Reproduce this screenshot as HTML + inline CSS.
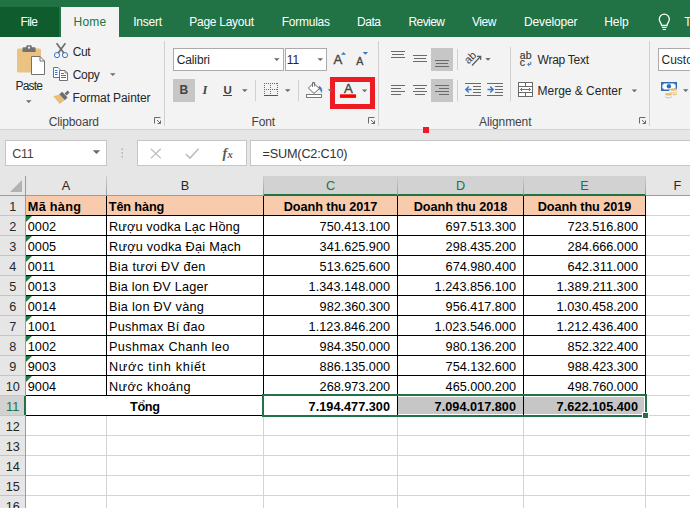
<!DOCTYPE html>
<html lang="vi"><head><meta charset="utf-8"><title>Excel</title>
<style>
html,body{margin:0;padding:0;}
body{width:690px;height:508px;overflow:hidden;background:#fff;font-family:"Liberation Sans",sans-serif;}
#app{position:relative;width:690px;height:508px;overflow:hidden;background:#fff;}
.t{position:absolute;white-space:pre;line-height:16px;font-family:"Liberation Sans",sans-serif;}
.b{position:absolute;}
svg{position:absolute;overflow:visible;}

</style></head>
<body>
<div id="app">
<div class="b" style="left:0px;top:0px;width:690px;height:37px;background:#217346;"></div>
<div class="b" style="left:0px;top:7px;width:59px;height:30px;background:#0f5c2e;"></div>
<div class="b" style="left:61px;top:7px;width:58px;height:30px;background:#f3f3f3;"></div>
<div class="b" style="left:0px;top:37px;width:690px;height:92px;background:#f3f3f3;"></div>
<div class="b" style="left:0px;top:129px;width:690px;height:1px;background:#d4d4d4;"></div>
<div class="b" style="left:0px;top:130px;width:690px;height:46px;background:#e6e6e6;"></div>
<div class="b" style="left:164px;top:41px;width:1px;height:85px;background:#d0d0d0;"></div>
<div class="b" style="left:378px;top:41px;width:1px;height:85px;background:#d0d0d0;"></div>
<div class="b" style="left:649px;top:41px;width:1px;height:85px;background:#d0d0d0;"></div>
<div class="b" style="left:173px;top:48px;width:111px;height:23px;background:#fff;box-sizing:border-box;border:1px solid #ababab;"></div>
<div class="b" style="left:285px;top:48px;width:42px;height:23px;background:#fff;box-sizing:border-box;border:1px solid #ababab;"></div>
<div class="b" style="left:658px;top:48px;width:40px;height:23px;background:#fff;box-sizing:border-box;border:1px solid #ababab;"></div>
<div class="b" style="left:173px;top:79px;width:22px;height:23px;background:#c6c6c6;"></div>
<div class="b" style="left:431px;top:48px;width:22px;height:23px;background:#c6c6c6;"></div>
<div class="b" style="left:431px;top:79px;width:22px;height:23px;background:#c6c6c6;"></div>
<div class="b" style="left:330px;top:77px;width:45px;height:32px;background:transparent;box-sizing:border-box;border:5px solid #ed1c24;"></div>
<div class="b" style="left:423px;top:127px;width:6px;height:6px;background:#ed1c24;"></div>
<div class="b" style="left:5px;top:140px;width:102px;height:26px;background:#fff;box-sizing:border-box;border:1px solid #c6c6c6;"></div>
<div class="b" style="left:137px;top:140px;width:110px;height:26px;background:#fff;box-sizing:border-box;border:1px solid #c6c6c6;"></div>
<div class="b" style="left:250px;top:140px;width:445px;height:26px;background:#fff;box-sizing:border-box;border:1px solid #c6c6c6;"></div>
<div class="b" style="left:0px;top:176px;width:690px;height:20px;background:#e6e6e6;"></div>
<div class="b" style="left:264px;top:176px;width:381px;height:19px;background:#d2d2d2;"></div>
<div class="b" style="left:264px;top:194px;width:382px;height:2px;background:#217346;"></div>
<div class="b" style="left:0px;top:396px;width:25px;height:19px;background:#d2d2d2;"></div>
<div class="b" style="left:0px;top:196px;width:25px;height:312px;background:#e6e6e6;"></div>
<div class="b" style="left:0px;top:396px;width:24px;height:19px;background:#d2d2d2;"></div>
<div class="b" style="left:26px;top:215px;width:664px;height:1px;background:#d4d4d4;"></div>
<div class="b" style="left:26px;top:235px;width:664px;height:1px;background:#d4d4d4;"></div>
<div class="b" style="left:26px;top:255px;width:664px;height:1px;background:#d4d4d4;"></div>
<div class="b" style="left:26px;top:275px;width:664px;height:1px;background:#d4d4d4;"></div>
<div class="b" style="left:26px;top:295px;width:664px;height:1px;background:#d4d4d4;"></div>
<div class="b" style="left:26px;top:315px;width:664px;height:1px;background:#d4d4d4;"></div>
<div class="b" style="left:26px;top:335px;width:664px;height:1px;background:#d4d4d4;"></div>
<div class="b" style="left:26px;top:355px;width:664px;height:1px;background:#d4d4d4;"></div>
<div class="b" style="left:26px;top:375px;width:664px;height:1px;background:#d4d4d4;"></div>
<div class="b" style="left:26px;top:395px;width:664px;height:1px;background:#d4d4d4;"></div>
<div class="b" style="left:26px;top:415px;width:664px;height:1px;background:#d4d4d4;"></div>
<div class="b" style="left:26px;top:435px;width:664px;height:1px;background:#d4d4d4;"></div>
<div class="b" style="left:26px;top:455px;width:664px;height:1px;background:#d4d4d4;"></div>
<div class="b" style="left:26px;top:475px;width:664px;height:1px;background:#d4d4d4;"></div>
<div class="b" style="left:26px;top:495px;width:664px;height:1px;background:#d4d4d4;"></div>
<div class="b" style="left:26px;top:515px;width:664px;height:1px;background:#d4d4d4;"></div>
<div class="b" style="left:106px;top:196px;width:1px;height:312px;background:#d4d4d4;"></div>
<div class="b" style="left:263px;top:196px;width:1px;height:312px;background:#d4d4d4;"></div>
<div class="b" style="left:397px;top:196px;width:1px;height:312px;background:#d4d4d4;"></div>
<div class="b" style="left:523px;top:196px;width:1px;height:312px;background:#d4d4d4;"></div>
<div class="b" style="left:645px;top:196px;width:1px;height:312px;background:#d4d4d4;"></div>
<div class="b" style="left:709px;top:196px;width:1px;height:312px;background:#d4d4d4;"></div>
<div class="b" style="left:0px;top:195px;width:25px;height:1px;background:#c4c4c4;"></div>
<div class="b" style="left:0px;top:215px;width:25px;height:1px;background:#c4c4c4;"></div>
<div class="b" style="left:0px;top:235px;width:25px;height:1px;background:#c4c4c4;"></div>
<div class="b" style="left:0px;top:255px;width:25px;height:1px;background:#c4c4c4;"></div>
<div class="b" style="left:0px;top:275px;width:25px;height:1px;background:#c4c4c4;"></div>
<div class="b" style="left:0px;top:295px;width:25px;height:1px;background:#c4c4c4;"></div>
<div class="b" style="left:0px;top:315px;width:25px;height:1px;background:#c4c4c4;"></div>
<div class="b" style="left:0px;top:335px;width:25px;height:1px;background:#c4c4c4;"></div>
<div class="b" style="left:0px;top:355px;width:25px;height:1px;background:#c4c4c4;"></div>
<div class="b" style="left:0px;top:375px;width:25px;height:1px;background:#c4c4c4;"></div>
<div class="b" style="left:0px;top:395px;width:25px;height:1px;background:#c4c4c4;"></div>
<div class="b" style="left:0px;top:415px;width:25px;height:1px;background:#c4c4c4;"></div>
<div class="b" style="left:0px;top:435px;width:25px;height:1px;background:#c4c4c4;"></div>
<div class="b" style="left:0px;top:455px;width:25px;height:1px;background:#c4c4c4;"></div>
<div class="b" style="left:0px;top:475px;width:25px;height:1px;background:#c4c4c4;"></div>
<div class="b" style="left:0px;top:495px;width:25px;height:1px;background:#c4c4c4;"></div>
<div class="b" style="left:0px;top:515px;width:25px;height:1px;background:#c4c4c4;"></div>
<div class="b" style="left:25px;top:176px;width:1px;height:332px;background:#9b9b9b;"></div>
<div class="b" style="left:0px;top:195px;width:26px;height:1px;background:#9b9b9b;"></div>
<div class="b" style="left:24px;top:396px;width:2px;height:19px;background:#217346;"></div>
<div class="b" style="left:106px;top:176px;width:1px;height:19px;background:linear-gradient(#cfcfcf,#9e9e9e);"></div>
<div class="b" style="left:263px;top:176px;width:1px;height:19px;background:linear-gradient(#cfcfcf,#9e9e9e);"></div>
<div class="b" style="left:397px;top:176px;width:1px;height:19px;background:linear-gradient(#cfcfcf,#9e9e9e);"></div>
<div class="b" style="left:523px;top:176px;width:1px;height:19px;background:linear-gradient(#cfcfcf,#9e9e9e);"></div>
<div class="b" style="left:645px;top:176px;width:1px;height:19px;background:linear-gradient(#cfcfcf,#9e9e9e);"></div>
<div class="b" style="left:709px;top:176px;width:1px;height:19px;background:linear-gradient(#cfcfcf,#9e9e9e);"></div>
<div class="b" style="left:26px;top:195px;width:238px;height:1px;background:#9b9b9b;"></div>
<div class="b" style="left:646px;top:195px;width:44px;height:1px;background:#9b9b9b;"></div>
<div class="b" style="left:26px;top:196px;width:620px;height:19px;background:#f8cbad;"></div>
<div class="b" style="left:398px;top:397px;width:246px;height:17px;background:#c6c6c6;"></div>
<div class="b" style="left:106px;top:396px;width:1px;height:19px;background:#fff;"></div>
<div class="b" style="left:26px;top:215px;width:620px;height:1px;background:#000;"></div>
<div class="b" style="left:26px;top:235px;width:620px;height:1px;background:#000;"></div>
<div class="b" style="left:26px;top:255px;width:620px;height:1px;background:#000;"></div>
<div class="b" style="left:26px;top:275px;width:620px;height:1px;background:#000;"></div>
<div class="b" style="left:26px;top:295px;width:620px;height:1px;background:#000;"></div>
<div class="b" style="left:26px;top:315px;width:620px;height:1px;background:#000;"></div>
<div class="b" style="left:26px;top:335px;width:620px;height:1px;background:#000;"></div>
<div class="b" style="left:26px;top:355px;width:620px;height:1px;background:#000;"></div>
<div class="b" style="left:26px;top:375px;width:620px;height:1px;background:#000;"></div>
<div class="b" style="left:26px;top:395px;width:620px;height:1px;background:#000;"></div>
<div class="b" style="left:26px;top:415px;width:620px;height:1px;background:#000;"></div>
<div class="b" style="left:106px;top:196px;width:1px;height:200px;background:#000;"></div>
<div class="b" style="left:263px;top:196px;width:1px;height:220px;background:#000;"></div>
<div class="b" style="left:397px;top:196px;width:1px;height:220px;background:#000;"></div>
<div class="b" style="left:523px;top:196px;width:1px;height:220px;background:#000;"></div>
<div class="b" style="left:645px;top:196px;width:1px;height:220px;background:#000;"></div>
<svg style="left:26px;top:216px" width="6" height="6"><path d="M0 0H6L0 6Z" fill="#1e7a3e"/></svg>
<svg style="left:26px;top:236px" width="6" height="6"><path d="M0 0H6L0 6Z" fill="#1e7a3e"/></svg>
<svg style="left:26px;top:256px" width="6" height="6"><path d="M0 0H6L0 6Z" fill="#1e7a3e"/></svg>
<svg style="left:26px;top:276px" width="6" height="6"><path d="M0 0H6L0 6Z" fill="#1e7a3e"/></svg>
<svg style="left:26px;top:296px" width="6" height="6"><path d="M0 0H6L0 6Z" fill="#1e7a3e"/></svg>
<svg style="left:26px;top:316px" width="6" height="6"><path d="M0 0H6L0 6Z" fill="#1e7a3e"/></svg>
<svg style="left:26px;top:336px" width="6" height="6"><path d="M0 0H6L0 6Z" fill="#1e7a3e"/></svg>
<svg style="left:26px;top:356px" width="6" height="6"><path d="M0 0H6L0 6Z" fill="#1e7a3e"/></svg>
<svg style="left:26px;top:376px" width="6" height="6"><path d="M0 0H6L0 6Z" fill="#1e7a3e"/></svg>
<svg style="left:10px;top:180px" width="12" height="12"><path d="M12 0V12H0Z" fill="#b2b2b2"/></svg>
<div class="b" style="left:262px;top:394px;width:385px;height:23px;background:transparent;box-sizing:border-box;border:2px solid #217346;"></div>
<div class="b" style="left:642px;top:412px;width:7px;height:7px;background:#217346;border:1px solid #fff;box-sizing:border-box;"></div><svg id="icons" style="left:0;top:0" width="690" height="508" viewBox="0 0 690 508">
<!-- Paste clipboard -->
<rect x="17" y="48.5" width="24" height="24" rx="1.5" fill="#eac282"/>
<path d="M22.5 52V48.2a1 1 0 0 1 1-1H26.3V46.2a1 1 0 0 1 1-1H30.8a1 1 0 0 1 1 1V47.2H34.6a1 1 0 0 1 1 1V52Z" fill="#727272"/>
<circle cx="29.05" cy="47.7" r="1.1" fill="#f3f3f3"/>
<path d="M31.5 56.5H40L44.5 61V74.5H31.5Z" fill="#fff" stroke="#727272" stroke-width="1"/>
<path d="M40 56.5V61H44.5" fill="none" stroke="#727272" stroke-width="1"/>
<path d="M26 100.2H31.6L28.8 103Z" fill="#6a6a6a"/>
<!-- Cut scissors -->
<path d="M57 43.8L63.4 52.6M65 43.8L58.6 52.6" fill="none" stroke="#6d6d6d" stroke-width="1.7" stroke-linecap="round"/>
<circle cx="57" cy="55.1" r="2.6" fill="none" stroke="#3b78c4" stroke-width="1"/>
<circle cx="65" cy="55.1" r="2.6" fill="none" stroke="#3b78c4" stroke-width="1"/>
<!-- Copy -->
<path d="M53.5 67.5H58L60 69.5V77.5H53.5Z" fill="#fff" stroke="#727272" stroke-width="1"/>
<path d="M55 70.5H57.5M55 72.5H57.5M55 74.5H57.5" stroke="#3b78c4" stroke-width="1"/>
<path d="M59.5 70.5H65L67.5 73V80.5H59.5Z" fill="#fff" stroke="#727272" stroke-width="1"/>
<path d="M65 70.5V73H67.5" fill="none" stroke="#727272" stroke-width="0.8"/>
<path d="M61 73.5H64M61 75.5H66M61 77.5H66" stroke="#3b78c4" stroke-width="1"/>
<path d="M110 73.2H115.6L112.8 76Z" fill="#6a6a6a"/>
<!-- Format painter -->
<path d="M53.3 96.3L59.4 94.6L64.4 100.2L59.8 103.9Z" fill="#e8bd78"/>
<path d="M59.3 94.2L62.2 91.8L67.6 97.6L64.8 100.2Z" fill="#6d6d6d"/>
<path d="M64.6 93.4L67.6 90.4L69.6 92.4L66.6 95.4Z" fill="#6d6d6d"/>
<!-- dialog launchers -->
<g fill="none" stroke="#6a6a6a" stroke-width="1">
<path d="M160.5 117.5H154.5V123.5M157 120L160.5 123.5M160.5 120.5V123.5H157.5"/>
<path d="M374.5 117.5H368.5V123.5M371 120L374.5 123.5M374.5 120.5V123.5H371.5"/>
<path d="M645.5 117.5H639.5V123.5M642 120L645.5 123.5M645.5 120.5V123.5H642.5"/>
</g>
<!-- font combos arrows -->
<path d="M274 58.2H279.6L276.8 61Z" fill="#6a6a6a"/>
<path d="M317.5 58.2H323.1L320.3 61Z" fill="#6a6a6a"/>
<!-- grow / shrink font -->
<path d="M341 54.8L343.5 52.1L346 54.8Z" fill="#3b78c4"/>
<path d="M362.7 52.1H368.1L365.4 54.8Z" fill="#3b78c4"/>
<!-- underline bar + arrow -->
<rect x="223" y="95" width="9" height="1" fill="#444"/>
<path d="M242 89.2H247.6L244.8 92Z" fill="#6a6a6a"/>
<rect x="255" y="80" width="1" height="21" fill="#d0d0d0"/>
<!-- borders icon -->
<g stroke="#6a6a6a" stroke-width="1" stroke-dasharray="1 1">
<path d="M264 83.5H278"/><path d="M264 89.5H278"/>
<path d="M264.5 83V95"/><path d="M270.5 83V95"/><path d="M277.5 83V95"/>
</g>
<rect x="264" y="95" width="14" height="1" fill="#555"/>
<path d="M284.9 89.2H290.5L287.7 92Z" fill="#6a6a6a"/>
<rect x="298" y="80" width="1" height="21" fill="#d0d0d0"/>
<!-- fill bucket -->
<path d="M313.5 83.2L319.5 88.6L314 93.4L308.3 88Z" fill="#fff" stroke="#6a6a6a" stroke-width="1" stroke-linejoin="round"/>
<path d="M312.5 87V82.5H314.6V86.5" fill="none" stroke="#6a6a6a" stroke-width="0.9"/>
<path d="M319.2 86.2C321.6 87.4 322.6 89.8 321.4 92.4C320.9 90.6 320.2 89.4 319 88.6Z" fill="#3b78c4" stroke="#3b78c4" stroke-width="0.6"/>
<rect x="306.5" y="94.5" width="15" height="3" fill="#fff" stroke="#7a7a7a" stroke-width="1"/>
<path d="M327.8 89.2H333.4L330.6 92Z" fill="#6a6a6a"/>
<!-- font color -->
<rect x="340" y="94.3" width="16" height="3.6" fill="#ff0000"/>
<path d="M361.9 89.5H367.3L364.6 92.2Z" fill="#6a6a6a"/>
<!-- alignment lines -->
<g fill="#6a6a6a">
<rect x="391" y="51" width="14" height="1"/><rect x="392" y="54" width="12" height="1"/><rect x="391" y="57" width="14" height="1"/>
<rect x="413" y="55" width="14" height="1"/><rect x="414" y="58" width="12" height="1"/><rect x="413" y="61" width="14" height="1"/>
<rect x="435" y="60" width="14" height="1"/><rect x="436" y="63" width="12" height="1"/><rect x="435" y="66" width="14" height="1"/>
<rect x="391" y="85" width="14" height="1"/><rect x="391" y="88" width="10" height="1"/><rect x="391" y="91" width="14" height="1"/><rect x="391" y="94" width="10" height="1"/>
<rect x="413" y="85" width="14" height="1"/><rect x="415" y="88" width="10" height="1"/><rect x="413" y="91" width="14" height="1"/><rect x="415" y="94" width="10" height="1"/>
<rect x="435" y="85" width="14" height="1"/><rect x="439" y="88" width="10" height="1"/><rect x="435" y="91" width="14" height="1"/><rect x="439" y="94" width="10" height="1"/>
</g>
<rect x="457" y="49" width="1" height="21" fill="#d0d0d0"/>
<rect x="457" y="80" width="1" height="21" fill="#d0d0d0"/>
<rect x="510" y="47" width="1" height="54" fill="#d0d0d0"/>
<!-- orientation -->
<text x="0" y="0" transform="translate(468.4 64.6) rotate(-45)" font-family="Liberation Sans, sans-serif" font-size="11" fill="#444">ab</text>
<path d="M472 65.5L480.5 56.5M477 56.3H480.7V60" fill="none" stroke="#5a5a5a" stroke-width="1.2"/>
<path d="M485.3 58H490.7L488 60.7Z" fill="#6a6a6a"/>
<!-- indent icons -->
<g fill="#6a6a6a">
<rect x="465" y="83" width="16" height="1"/><rect x="473" y="86" width="8" height="1"/><rect x="473" y="89" width="8" height="1"/><rect x="473" y="92" width="8" height="1"/><rect x="465" y="95" width="16" height="1"/>
<rect x="487" y="83" width="16" height="1"/><rect x="495" y="86" width="8" height="1"/><rect x="495" y="89" width="8" height="1"/><rect x="495" y="92" width="8" height="1"/><rect x="487" y="95" width="16" height="1"/>
</g>
<path d="M471.5 89.5H466M468.8 86.5L465.8 89.5L468.8 92.5" fill="none" stroke="#3b78c4" stroke-width="1.4"/>
<path d="M487.5 89.5H493M490.2 86.5L493.2 89.5L490.2 92.5" fill="none" stroke="#3b78c4" stroke-width="1.4"/>
<!-- wrap text -->
<text x="519.8" y="59.3" font-family="Liberation Sans, sans-serif" font-size="10.5" fill="#3a3a3a" stroke="#3a3a3a" stroke-width="0.2">ab</text>
<text x="519.8" y="66.3" font-family="Liberation Sans, sans-serif" font-size="10.5" fill="#3a3a3a" stroke="#3a3a3a" stroke-width="0.2">c</text>
<path d="M530.8 61.8V64.4H527.8M529.3 62.8L527.6 64.4L529.3 66" fill="none" stroke="#3b78c4" stroke-width="1"/>
<!-- merge & center -->
<rect x="518.5" y="82.5" width="14" height="14" fill="#fff" stroke="#6a6a6a" stroke-width="1"/>
<path d="M518.5 86.5H532.5M518.5 92.5H532.5M525.5 82.5V86.5M525.5 92.5V96.5" fill="none" stroke="#6a6a6a" stroke-width="1"/>
<path d="M520.5 89.5H530.5M522 88L520.5 89.5L522 91M529 88L530.5 89.5L529 91" fill="none" stroke="#3b78c4" stroke-width="1"/>
<path d="M631.6 89.4H637.2L634.4 92.2Z" fill="#6a6a6a"/>
<!-- accounting -->
<rect x="661" y="82" width="16" height="9" fill="#2f6db5"/>
<path d="M663.6 83.4H674.4V84.6H675.6V88.4H674.4V89.6H663.6V88.4H662.4V84.6H663.6Z" fill="#fff"/>
<circle cx="668.9" cy="86.3" r="2.2" fill="#2f6db5"/>
<path d="M669.2 90.5a4.4 1.6 0 0 1 8.8 0V96a4.4 1.6 0 0 1 -8.8 0Z" fill="#f3f3f3"/>
<g fill="#e8bd78">
<ellipse cx="673.6" cy="89.5" rx="3.6" ry="1.25"/>
<path d="M670 91.2a3.6 1.25 0 0 0 7.2 0v0.9a3.6 1.25 0 0 1 -7.2 0Z"/>
<path d="M671.6 93.6a3.6 1.25 0 0 0 5.6 -0.2v0.9a3.6 1.25 0 0 1 -5.6 0.4Z"/>
</g>
<path d="M664.2 94.2a4.4 1.6 0 0 1 8.6 0V97a4.4 1.6 0 0 1 -8.6 0Z" fill="#f3f3f3"/>
<g fill="#e8bd78">
<ellipse cx="668.5" cy="94.2" rx="3.6" ry="1.25"/>
<path d="M664.9 95.8a3.6 1.25 0 0 0 7.2 0v0.8a3.6 1.25 0 0 1 -7.2 0Z"/>
<path d="M665.6 97.5a3.6 1.1 0 0 0 5.8 0v0.2a3.6 1.1 0 0 1 -5.8 0Z"/>
</g>
<path d="M683 89.2H688.4L685.7 92Z" fill="#6a6a6a"/>
<!-- lightbulb -->
<path d="M661.6 25.5C661.6 22.8 659.3 22.2 659.3 19.2A5 5 0 0 1 669.3 19.2C669.3 22.2 667 22.8 667 25.5Z" fill="none" stroke="#fff" stroke-width="1.3"/>
<path d="M662 27.5H666.6M662.6 29.5H666" stroke="#fff" stroke-width="1.2"/>
<!-- formula bar -->
<path d="M92.8 150.3H100.2L96.5 154Z" fill="#6a6a6a"/>
<g fill="#b0b0b0"><rect x="121.5" y="148.5" width="1.5" height="1.5"/><rect x="121.5" y="152.2" width="1.5" height="1.5"/><rect x="121.5" y="155.9" width="1.5" height="1.5"/></g>
<path d="M150.8 148.8L160.8 158.4M160.8 148.8L150.8 158.4" stroke="#bdbdbd" stroke-width="1.3" fill="none"/>
<path d="M185.8 154L190 158L198.6 148.8" stroke="#bdbdbd" stroke-width="1.6" fill="none"/>
<text x="222.5" y="157.5" font-family="Liberation Serif, serif" font-style="italic" font-weight="bold" font-size="14" fill="#5a5a5a">f</text>
<text x="227.6" y="158.3" font-family="Liberation Serif, serif" font-style="italic" font-weight="bold" font-size="10.5" fill="#5a5a5a">x</text>
</svg>

<span class="t" style="left:20.50px;top:13.84px;font-size:12px;color:#fff;letter-spacing:-0.615px;">File</span>
<span class="t" style="left:73.60px;top:13.84px;font-size:12px;color:#217346;letter-spacing:0.195px;">Home</span>
<span class="t" style="left:133.30px;top:13.84px;font-size:12px;color:#fff;letter-spacing:-0.263px;">Insert</span>
<span class="t" style="left:189.30px;top:13.84px;font-size:12px;color:#fff;letter-spacing:-0.269px;">Page Layout</span>
<span class="t" style="left:281.70px;top:13.84px;font-size:12px;color:#fff;letter-spacing:-0.245px;">Formulas</span>
<span class="t" style="left:357.00px;top:13.84px;font-size:12px;color:#fff;letter-spacing:-0.453px;">Data</span>
<span class="t" style="left:408.50px;top:13.84px;font-size:12px;color:#fff;letter-spacing:-0.572px;">Review</span>
<span class="t" style="left:472.00px;top:13.84px;font-size:12px;color:#fff;letter-spacing:-0.432px;">View</span>
<span class="t" style="left:524.00px;top:13.84px;font-size:12px;color:#fff;letter-spacing:-0.150px;">Developer</span>
<span class="t" style="left:604.20px;top:13.84px;font-size:12px;color:#fff;letter-spacing:-0.029px;">Help</span>
<span class="t" style="left:684.20px;top:13.84px;font-size:12px;color:#fff;">T</span>
<span class="t" style="left:72.80px;top:43.84px;font-size:12px;color:#262626;letter-spacing:-0.494px;">Cut</span>
<span class="t" style="left:72.80px;top:67.04px;font-size:12px;color:#262626;letter-spacing:-0.339px;">Copy</span>
<span class="t" style="left:72.50px;top:90.34px;font-size:12px;color:#262626;letter-spacing:-0.105px;">Format Painter</span>
<span class="t" style="left:15.50px;top:77.84px;font-size:12px;color:#262626;letter-spacing:-0.797px;">Paste</span>
<span class="t" style="left:48.70px;top:113.74px;font-size:12px;color:#444;letter-spacing:-0.134px;">Clipboard</span>
<span class="t" style="left:176.70px;top:51.54px;font-size:12px;color:#262626;letter-spacing:-0.119px;">Calibri</span>
<span class="t" style="left:286.70px;top:51.54px;font-size:12px;color:#262626;">11</span>
<span class="t" style="left:251.50px;top:113.74px;font-size:12px;color:#444;letter-spacing:-0.172px;">Font</span>
<span class="t" style="left:479.00px;top:113.74px;font-size:12px;color:#444;letter-spacing:-0.109px;">Alignment</span>
<span class="t" style="left:537.60px;top:52.34px;font-size:12px;color:#262626;letter-spacing:-0.272px;">Wrap Text</span>
<span class="t" style="left:537.60px;top:83.04px;font-size:12px;color:#262626;letter-spacing:-0.023px;">Merge &amp; Center</span>
<span class="t" style="left:661.50px;top:51.74px;font-size:12px;color:#262626;">Custo</span>
<span class="t" style="left:179.50px;top:81.84px;font-size:12px;color:#444;font-weight:700;">B</span>
<span class="t" style="left:202.60px;top:81.67px;font-size:12.5px;color:#444;font-weight:700;font-style:italic;font-family:'Liberation Serif',serif;">I</span>
<span class="t" style="left:223.40px;top:81.82px;font-size:11.5px;color:#444;font-weight:700;">U</span>
<span class="t" style="left:333.60px;top:51.83px;font-size:13.2px;color:#444;-webkit-text-stroke:0.35px #444;">A</span>
<span class="t" style="left:356.30px;top:52.73px;font-size:10.6px;color:#444;-webkit-text-stroke:0.35px #444;">A</span>
<span class="t" style="left:343.90px;top:81.33px;font-size:13.2px;color:#444;-webkit-text-stroke:0.35px #444;">A</span>
<span class="t" style="left:12.30px;top:146.17px;font-size:12.5px;color:#444;letter-spacing:-0.358px;">C11</span>
<span class="t" style="left:262.50px;top:146.10px;font-size:12.7px;color:#333;letter-spacing:-0.189px;">=SUM(C2:C10)</span>
<span class="t" style="left:61.77px;top:178.10px;font-size:12.7px;color:#262626;">A</span>
<span class="t" style="left:180.77px;top:178.10px;font-size:12.7px;color:#262626;">B</span>
<span class="t" style="left:325.91px;top:178.10px;font-size:12.7px;color:#217346;">C</span>
<span class="t" style="left:455.91px;top:178.10px;font-size:12.7px;color:#217346;">D</span>
<span class="t" style="left:580.27px;top:178.10px;font-size:12.7px;color:#217346;">E</span>
<span class="t" style="left:673.62px;top:178.10px;font-size:12.7px;color:#262626;">F</span>
<span class="t" style="left:9.17px;top:199.20px;font-size:12.7px;color:#262626;">1</span>
<span class="t" style="left:9.17px;top:219.20px;font-size:12.7px;color:#262626;">2</span>
<span class="t" style="left:9.17px;top:239.20px;font-size:12.7px;color:#262626;">3</span>
<span class="t" style="left:9.17px;top:259.20px;font-size:12.7px;color:#262626;">4</span>
<span class="t" style="left:9.17px;top:279.20px;font-size:12.7px;color:#262626;">5</span>
<span class="t" style="left:9.17px;top:299.20px;font-size:12.7px;color:#262626;">6</span>
<span class="t" style="left:9.17px;top:319.20px;font-size:12.7px;color:#262626;">7</span>
<span class="t" style="left:9.17px;top:339.20px;font-size:12.7px;color:#262626;">8</span>
<span class="t" style="left:9.17px;top:359.20px;font-size:12.7px;color:#262626;">9</span>
<span class="t" style="left:5.64px;top:379.20px;font-size:12.7px;color:#262626;">10</span>
<span class="t" style="left:6.11px;top:399.20px;font-size:12.7px;color:#217346;">11</span>
<span class="t" style="left:5.64px;top:419.20px;font-size:12.7px;color:#262626;">12</span>
<span class="t" style="left:5.64px;top:439.20px;font-size:12.7px;color:#262626;">13</span>
<span class="t" style="left:5.64px;top:459.20px;font-size:12.7px;color:#262626;">14</span>
<span class="t" style="left:5.64px;top:479.20px;font-size:12.7px;color:#262626;">15</span>
<span class="t" style="left:5.64px;top:499.20px;font-size:12.7px;color:#262626;">16</span>
<span class="t" style="left:27.80px;top:199.20px;font-size:12.7px;color:#000;font-weight:700;letter-spacing:0.289px;">Mã hàng</span>
<span class="t" style="left:108.80px;top:199.20px;font-size:12.7px;color:#000;font-weight:700;letter-spacing:-0.127px;">Tên hàng</span>
<span class="t" style="left:283.70px;top:199.20px;font-size:12.7px;color:#000;font-weight:700;letter-spacing:-0.067px;">Doanh thu 2017</span>
<span class="t" style="left:413.70px;top:199.20px;font-size:12.7px;color:#000;font-weight:700;letter-spacing:-0.067px;">Doanh thu 2018</span>
<span class="t" style="left:537.70px;top:199.20px;font-size:12.7px;color:#000;font-weight:700;letter-spacing:-0.067px;">Doanh thu 2019</span>
<span class="t" style="left:27.80px;top:219.20px;font-size:12.7px;color:#000;">0002</span>
<span class="t" style="left:109.00px;top:219.20px;font-size:12.7px;color:#000;letter-spacing:0.146px;">Rượu vodka Lạc Hồng</span>
<span class="t" style="left:319.60px;top:219.20px;font-size:12.7px;color:#000;letter-spacing:-0.016px;">750.413.100</span>
<span class="t" style="left:445.60px;top:219.20px;font-size:12.7px;color:#000;letter-spacing:-0.016px;">697.513.300</span>
<span class="t" style="left:567.60px;top:219.20px;font-size:12.7px;color:#000;letter-spacing:-0.016px;">723.516.800</span>
<span class="t" style="left:27.80px;top:239.20px;font-size:12.7px;color:#000;">0005</span>
<span class="t" style="left:109.00px;top:239.20px;font-size:12.7px;color:#000;letter-spacing:0.243px;">Rượu vodka Đại Mạch</span>
<span class="t" style="left:319.60px;top:239.20px;font-size:12.7px;color:#000;letter-spacing:-0.016px;">341.625.900</span>
<span class="t" style="left:445.60px;top:239.20px;font-size:12.7px;color:#000;letter-spacing:-0.016px;">298.435.200</span>
<span class="t" style="left:567.60px;top:239.20px;font-size:12.7px;color:#000;letter-spacing:-0.016px;">284.666.000</span>
<span class="t" style="left:27.80px;top:259.20px;font-size:12.7px;color:#000;">0011</span>
<span class="t" style="left:109.00px;top:259.20px;font-size:12.7px;color:#000;letter-spacing:0.395px;">Bia tươi ĐV đen</span>
<span class="t" style="left:319.60px;top:259.20px;font-size:12.7px;color:#000;letter-spacing:-0.016px;">513.625.600</span>
<span class="t" style="left:445.60px;top:259.20px;font-size:12.7px;color:#000;letter-spacing:-0.016px;">674.980.400</span>
<span class="t" style="left:567.60px;top:259.20px;font-size:12.7px;color:#000;letter-spacing:0.078px;">642.311.000</span>
<span class="t" style="left:27.80px;top:279.20px;font-size:12.7px;color:#000;">0013</span>
<span class="t" style="left:109.00px;top:279.20px;font-size:12.7px;color:#000;letter-spacing:0.199px;">Bia lon ĐV Lager</span>
<span class="t" style="left:308.60px;top:279.20px;font-size:12.7px;color:#000;letter-spacing:0.022px;">1.343.148.000</span>
<span class="t" style="left:434.60px;top:279.20px;font-size:12.7px;color:#000;letter-spacing:0.022px;">1.243.856.100</span>
<span class="t" style="left:556.60px;top:279.20px;font-size:12.7px;color:#000;letter-spacing:0.100px;">1.389.211.300</span>
<span class="t" style="left:27.80px;top:299.20px;font-size:12.7px;color:#000;">0014</span>
<span class="t" style="left:109.00px;top:299.20px;font-size:12.7px;color:#000;letter-spacing:0.280px;">Bia lon ĐV vàng</span>
<span class="t" style="left:319.60px;top:299.20px;font-size:12.7px;color:#000;letter-spacing:-0.016px;">982.360.300</span>
<span class="t" style="left:445.60px;top:299.20px;font-size:12.7px;color:#000;letter-spacing:-0.016px;">956.417.800</span>
<span class="t" style="left:556.60px;top:299.20px;font-size:12.7px;color:#000;letter-spacing:0.022px;">1.030.458.200</span>
<span class="t" style="left:27.80px;top:319.20px;font-size:12.7px;color:#000;">1001</span>
<span class="t" style="left:109.00px;top:319.20px;font-size:12.7px;color:#000;letter-spacing:0.200px;">Pushmax Bí đao</span>
<span class="t" style="left:308.60px;top:319.20px;font-size:12.7px;color:#000;letter-spacing:0.022px;">1.123.846.200</span>
<span class="t" style="left:434.60px;top:319.20px;font-size:12.7px;color:#000;letter-spacing:0.022px;">1.023.546.000</span>
<span class="t" style="left:556.60px;top:319.20px;font-size:12.7px;color:#000;letter-spacing:0.022px;">1.212.436.400</span>
<span class="t" style="left:27.80px;top:339.20px;font-size:12.7px;color:#000;">1002</span>
<span class="t" style="left:109.00px;top:339.20px;font-size:12.7px;color:#000;letter-spacing:0.377px;">Pushmax Chanh leo</span>
<span class="t" style="left:319.60px;top:339.20px;font-size:12.7px;color:#000;letter-spacing:-0.016px;">984.350.000</span>
<span class="t" style="left:445.60px;top:339.20px;font-size:12.7px;color:#000;letter-spacing:-0.016px;">980.136.200</span>
<span class="t" style="left:567.60px;top:339.20px;font-size:12.7px;color:#000;letter-spacing:-0.016px;">852.322.400</span>
<span class="t" style="left:27.80px;top:359.20px;font-size:12.7px;color:#000;">9003</span>
<span class="t" style="left:109.00px;top:359.20px;font-size:12.7px;color:#000;letter-spacing:0.697px;">Nước tinh khiết</span>
<span class="t" style="left:319.60px;top:359.20px;font-size:12.7px;color:#000;letter-spacing:-0.016px;">886.135.000</span>
<span class="t" style="left:445.60px;top:359.20px;font-size:12.7px;color:#000;letter-spacing:-0.016px;">754.132.600</span>
<span class="t" style="left:567.60px;top:359.20px;font-size:12.7px;color:#000;letter-spacing:-0.016px;">988.423.300</span>
<span class="t" style="left:27.80px;top:379.20px;font-size:12.7px;color:#000;">9004</span>
<span class="t" style="left:109.00px;top:379.20px;font-size:12.7px;color:#000;letter-spacing:0.412px;">Nước khoáng</span>
<span class="t" style="left:319.60px;top:379.20px;font-size:12.7px;color:#000;letter-spacing:-0.016px;">268.973.200</span>
<span class="t" style="left:445.60px;top:379.20px;font-size:12.7px;color:#000;letter-spacing:-0.016px;">465.000.200</span>
<span class="t" style="left:567.60px;top:379.20px;font-size:12.7px;color:#000;letter-spacing:-0.016px;">498.760.000</span>
<span class="t" style="left:130.00px;top:399.20px;font-size:12.7px;color:#000;font-weight:700;letter-spacing:-0.372px;">Tổng</span>
<span class="t" style="left:308.60px;top:399.20px;font-size:12.7px;color:#000;font-weight:700;letter-spacing:0.022px;">7.194.477.300</span>
<span class="t" style="left:434.60px;top:399.20px;font-size:12.7px;color:#000;font-weight:700;letter-spacing:0.022px;">7.094.017.800</span>
<span class="t" style="left:556.60px;top:399.20px;font-size:12.7px;color:#000;font-weight:700;letter-spacing:0.022px;">7.622.105.400</span>
</div>
</body></html>
